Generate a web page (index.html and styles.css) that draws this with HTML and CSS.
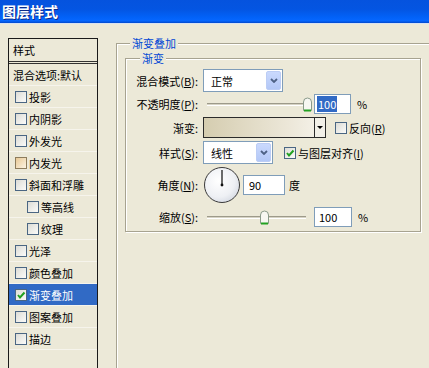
FILE: index.html
```html
<!DOCTYPE html>
<html lang="zh-CN">
<head>
  <meta charset="UTF-8">
  <meta name="viewport" content="width=device-width, initial-scale=1.0">
  <title>图层样式</title>
  <link rel="stylesheet" href="styles.css">
</head>
<body>
  <div class="titlebar">图层样式</div>

  <div class="content">
    <div class="sidebar">
      <div class="side-head">样式</div>
      <ul class="side-list">
        <li class="blend">混合选项:默认</li>
        <li><span class="cb"></span>投影</li>
        <li><span class="cb"></span>内阴影</li>
        <li><span class="cb"></span>外发光</li>
        <li><span class="cb hot"></span>内发光</li>
        <li><span class="cb"></span>斜面和浮雕</li>
        <li class="sub"><span class="cb"></span>等高线</li>
        <li class="sub"><span class="cb"></span>纹理</li>
        <li><span class="cb"></span>光泽</li>
        <li><span class="cb"></span>颜色叠加</li>
        <li class="selected"><span class="cb checked"><svg viewBox="0 0 10 10"><path d="M2 5 L4 7.5 L8.5 2.5" /></svg></span>渐变叠加</li>
        <li><span class="cb"></span>图案叠加</li>
        <li><span class="cb"></span>描边</li>
      </ul>
    </div>

    <fieldset class="group outer">
      <legend>渐变叠加</legend>
      <fieldset class="group inner">
        <legend>渐变</legend>

        <div class="row r-mode">
          <label class="lbl">混合模式(<u>B</u>):</label>
          <div class="combo w-mode">
            <span class="combo-text">正常</span>
            <span class="combo-btn"><svg viewBox="0 0 8 5"><path d="M1 1 L4 4 L7 1" /></svg></span>
          </div>
        </div>

        <div class="row r-opacity">
          <label class="lbl">不透明度(<u>P</u>):</label>
          <div class="slider">
            <div class="track"></div>
            <svg class="thumb" style="left: 100%" viewBox="0 0 11 15"><path class="thumb-body" d="M1.5 13.5 V5 Q1.5 1 5.5 1 Q9.5 1 9.5 5 V13.5 Z" /><path class="thumb-base" d="M2 13.5 H9" /></svg>
          </div>
          <div class="field w-pct"><span class="sel">100</span></div>
          <span class="unit">%</span>
        </div>

        <div class="row r-grad">
          <label class="lbl">渐变:</label>
          <div class="grad">
            <div class="grad-fill"></div>
            <div class="grad-arrow"><span class="tri"></span></div>
          </div>
          <span class="cb reverse"></span>
          <span class="cb-label">反向(<u>R</u>)</span>
        </div>

        <div class="row r-style">
          <label class="lbl">样式(<u>S</u>):</label>
          <div class="combo w-style">
            <span class="combo-text">线性</span>
            <span class="combo-btn"><svg viewBox="0 0 8 5"><path d="M1 1 L4 4 L7 1" /></svg></span>
          </div>
          <span class="cb checked align"><svg viewBox="0 0 10 10"><path d="M2 5 L4 7.5 L8.5 2.5" /></svg></span>
          <span class="cb-label">与图层对齐(<u>I</u>)</span>
        </div>

        <div class="row r-angle">
          <label class="lbl">角度(<u>N</u>):</label>
          <div class="dial">
            <svg viewBox="0 0 36 36"><line x1="18" y1="18" x2="18" y2="2" /><circle cx="18" cy="18" r="1.5" /></svg>
          </div>
          <div class="field w-angle">90</div>
          <span class="unit deg">度</span>
        </div>

        <div class="row r-scale">
          <label class="lbl">缩放(<u>S</u>):</label>
          <div class="slider">
            <div class="track"></div>
            <svg class="thumb" style="left: 61%" viewBox="0 0 11 15"><path class="thumb-body" d="M1.5 13.5 V5 Q1.5 1 5.5 1 Q9.5 1 9.5 5 V13.5 Z" /><path class="thumb-base" d="M2 13.5 H9" /></svg>
          </div>
          <div class="field w-scale">100</div>
          <span class="unit">%</span>
        </div>
      </fieldset>
    </fieldset>
  </div>
</body>
</html>
```

FILE: styles.css
```css
body {
  margin: 0;
  height: 368px;
  overflow: hidden;
  background: #ece9d8;
  font-family: "Noto Sans CJK SC", "Liberation Sans", sans-serif;
  font-size: 11px;
  color: #000;
}
.titlebar {
  height: 23px;
  line-height: 23px;
  padding-left: 2px;
  background: linear-gradient(#0553de 0%, #0455e2 40%, #0262f8 75%, #0667ff 90%, #0349cc 100%);
  border-bottom: 1px solid #d8e2f2;
  color: #fff;
  font-weight: bold;
  font-size: 14px;
  text-shadow: 1px 1px 0 #0b2a8a;
}
.content {
  display: flex;
  align-items: flex-start;
  padding: 14px 0 0 8px;
}

/* left style list */
.sidebar {
  width: 90px;
  height: 330px;
  box-sizing: border-box;
  border: 1px solid #1a1a1a;
  border-bottom: none;
  flex-shrink: 0;
}
.side-head {
  height: 22px;
  line-height: 22px;
  padding-left: 4px;
  border-bottom: 3px double #333;
}
.side-list {
  list-style: none;
  margin: 0;
  padding: 0;
}
.side-list li {
  display: flex;
  align-items: center;
  height: 22px;
  box-sizing: border-box;
  padding-left: 6px;
  border-bottom: 1px solid #f6f4ec;
  white-space: nowrap;
}
.side-list li.blend {
  padding-left: 4px;
}
.side-list li.sub {
  padding-left: 18px;
}
.side-list li.selected {
  background: #316ac5;
  color: #fff;
}
.side-list li .cb {
  margin-right: 2px;
}

/* checkbox */
.cb {
  display: inline-flex;
  align-items: center;
  justify-content: center;
  width: 12px;
  height: 12px;
  box-sizing: border-box;
  border: 1px solid #4a6683;
  background: linear-gradient(135deg, #dcdcd6, #fbfbf9);
  flex-shrink: 0;
}
.cb.hot {
  border-color: #8d7c5c;
  background: linear-gradient(135deg, #e9c995, #fbf3e2);
}
.cb svg {
  width: 10px;
  height: 10px;
}
.cb svg path {
  fill: none;
  stroke: #21a121;
  stroke-width: 2;
}
.cb-label {
  margin-left: 2px;
  white-space: nowrap;
}

/* group boxes */
.group {
  margin: 0;
  border: 1px solid #a7a390;
  box-shadow: 1px 1px 0 #fff, inset 1px 1px 0 #fff;
}
.group legend {
  padding: 0 2px;
  line-height: 13px;
  color: #0046d5;
  background: #ece9d8;
}
.outer {
  margin: -1px 0 0 18px;
  padding: 0 0 0 8px;
  flex: 1;
  min-width: 0;
  height: 330px;
  border-right: none;
  border-bottom: none;
}
.outer > legend {
  margin-left: 5px;
}
.inner {
  width: 296px;
  box-sizing: border-box;
  padding: 0 0 4px 0;
  margin-top: 2px;
}
.inner > legend {
  margin-left: 14px;
}

/* rows */
.row {
  display: flex;
  align-items: center;
}
.lbl {
  width: 72px;
  margin-right: 5px;
  text-align: right;
  white-space: nowrap;
}
.r-mode { height: 23px; margin-top: 4px; }
.r-opacity { height: 20px; margin-top: 2px; }
.r-grad { height: 21px; margin-top: 3px; }
.r-style { height: 23px; margin-top: 3px; }
.r-angle { height: 36px; margin-top: 3px; }
.r-scale { height: 20px; margin-top: 4px; }

/* combo box */
.combo {
  display: flex;
  align-items: center;
  justify-content: space-between;
  height: 23px;
  box-sizing: border-box;
  border: 1px solid #7f9db9;
  background: #fff;
  padding: 1px;
}
.w-mode { width: 80px; }
.w-style { width: 70px; }
.combo-text {
  padding-left: 6px;
}
.combo-btn {
  display: flex;
  align-items: center;
  justify-content: center;
  width: 15px;
  height: 19px;
  box-sizing: border-box;
  border: 1px solid #bccdf5;
  border-radius: 2px;
  background: linear-gradient(#cad9fd, #b3c8f7);
}
.combo-btn svg {
  width: 8px;
  height: 5px;
}
.combo-btn path {
  fill: none;
  stroke: #4d6185;
  stroke-width: 1.8;
}

/* slider */
.slider {
  position: relative;
  width: 109px;
  height: 20px;
}
.track {
  position: absolute;
  left: 4px;
  right: 6px;
  top: 9px;
  height: 1px;
  border-top: 1px solid #9d9a8a;
  border-bottom: 1px solid #fff;
  background: #d6d3c4;
}
.thumb {
  position: absolute;
  top: 3px;
  width: 11px;
  height: 15px;
  margin-left: -10px;
}
.thumb-body {
  fill: #f7f7f2;
  stroke: #8a9a8a;
  stroke-width: 1;
}
.thumb-base {
  stroke: #21a121;
  stroke-width: 2;
}

/* text fields */
.field {
  height: 20px;
  line-height: 18px;
  box-sizing: border-box;
  border: 1px solid #7f9db9;
  background: #fff;
  padding-left: 4px;
  margin-left: 2px;
}
.w-pct { width: 37px; padding-left: 2px; }
.w-scale { width: 38px; }
.w-angle { width: 42px; margin-left: 3px; padding-left: 5px; }
.sel {
  background: #316ac5;
  color: #fff;
  padding: 0 1px;
}
.unit {
  margin-left: 6px;
}
.unit.deg {
  margin-left: 4px;
}

/* gradient picker */
.grad {
  display: flex;
  width: 123px;
  height: 21px;
  box-sizing: border-box;
  border: 1px solid #2b2b2b;
}
.grad-fill {
  flex: 1;
  background: linear-gradient(to right, #d5cdb0, #ede8da 80%, #f3f0e6);
}
.grad-arrow {
  display: flex;
  align-items: center;
  justify-content: center;
  width: 10px;
  border-left: 1px solid #2b2b2b;
  background: #f2f0e8;
}
.tri {
  width: 0;
  height: 0;
  border-left: 3px solid transparent;
  border-right: 3px solid transparent;
  border-top: 3px solid #000;
}
.reverse {
  margin-left: 9px;
}
.align {
  margin-left: 11px;
}

/* angle dial */
.dial {
  width: 36px;
  height: 36px;
  margin-left: 1px;
  box-sizing: border-box;
  border: 1px solid #3a3a3a;
  border-radius: 50%;
  background: radial-gradient(circle at 40% 38%, #ffffff 0%, #eef0f4 55%, #c3c9d6 100%);
}
.dial svg {
  width: 34px;
  height: 34px;
  display: block;
}
.dial line {
  stroke: #111;
  stroke-width: 1.3;
}
.dial circle {
  fill: #111;
}
```
